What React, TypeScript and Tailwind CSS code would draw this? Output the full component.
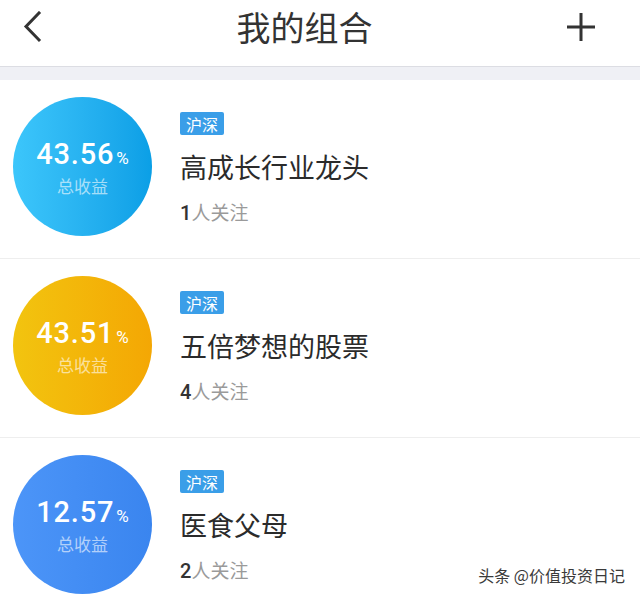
import React from "react";

const CJK = { fontFamily: '"Noto Sans CJK SC", "Noto Sans", sans-serif' };
const NUM = { fontFamily: 'Roboto, "Noto Sans", sans-serif' };

type Item = {
  value: string;
  title: string;
  count: string;
  grad: string;
};

const items: Item[] = [
  { value: "43.56", title: "高成长行业龙头", count: "1", grad: "bg-linear-to-r from-[#3cc6fb] to-[#0a9fe6]" },
  { value: "43.51", title: "五倍梦想的股票", count: "4", grad: "bg-linear-to-r from-[#f2c40f] to-[#f4a704]" },
  { value: "12.57", title: "医食父母", count: "2", grad: "bg-linear-to-r from-[#4c95f8] to-[#3a85ef]" },
];

function Row({ item }: { item: Item }) {
  return (
    <div className="flex h-[179px] border-b border-[#eeeeee] bg-white">
      <div className="pl-[13px] pt-[17px]">
        <div className={`flex h-[139px] w-[139px] flex-col items-center justify-center rounded-full ${item.grad}`}>
          <div className="flex items-baseline text-white" style={NUM}>
            <span className="text-[29px] font-medium leading-none tracking-[0.8px]">{item.value}</span>
            <span className="ml-[2px] text-[17px] leading-none">%</span>
          </div>
          <div className="mt-[8px] text-[17px] leading-none text-white/60" style={CJK}>
            总收益
          </div>
        </div>
      </div>
      <div className="ml-[28px] flex flex-col items-start pt-[32px]" style={CJK}>
        <div className="flex h-[23px] items-center rounded-[2px] bg-[#3a9ee8] px-[6px] text-[16px] leading-none text-white">
          沪深
        </div>
        <div className="mt-[18px] text-[27px] leading-none text-[#2b2b2b]">{item.title}</div>
        <div className="mt-[22px] flex items-baseline text-[19px] leading-none text-[#9a9a9a]">
          <span className="text-[20px] font-medium text-[#333333]" style={NUM}>{item.count}</span>
          <span>人关注</span>
        </div>
      </div>
    </div>
  );
}

export default function App() {
  return (
    <div className="relative h-[599px] w-[640px] overflow-hidden bg-white">
      <div className="h-[67px] border-b border-[#dcdde3] bg-white">
        <div className="flex h-[54px] items-center justify-between px-[22px]">
          <svg width="20" height="32" viewBox="0 0 20 32" className="ml-[1px]">
            <path d="M16 2 L3 15.5 L16 29" fill="none" stroke="#333" strokeWidth="3" strokeLinecap="square" strokeLinejoin="miter" />
          </svg>
          <div className="text-[34px] leading-none text-[#333333]" style={CJK}>
            我的组合
          </div>
          <svg width="30" height="30" viewBox="0 0 30 30" className="mr-[22px]">
            <path d="M15 1 V29 M1 15 H29" fill="none" stroke="#333" strokeWidth="3" />
          </svg>
        </div>
      </div>
      <div className="h-[13px] bg-[#eff0f5]" />
      {items.map((it) => (
        <Row key={it.title} item={it} />
      ))}
      <div
        className="absolute right-[15px] top-[567px] text-[16px] leading-none text-[#3a3a3a] [text-shadow:0_0_2px_#fff,0_0_2px_#fff]"
        style={CJK}
      >
        头条 @价值投资日记
      </div>
    </div>
  );
}
